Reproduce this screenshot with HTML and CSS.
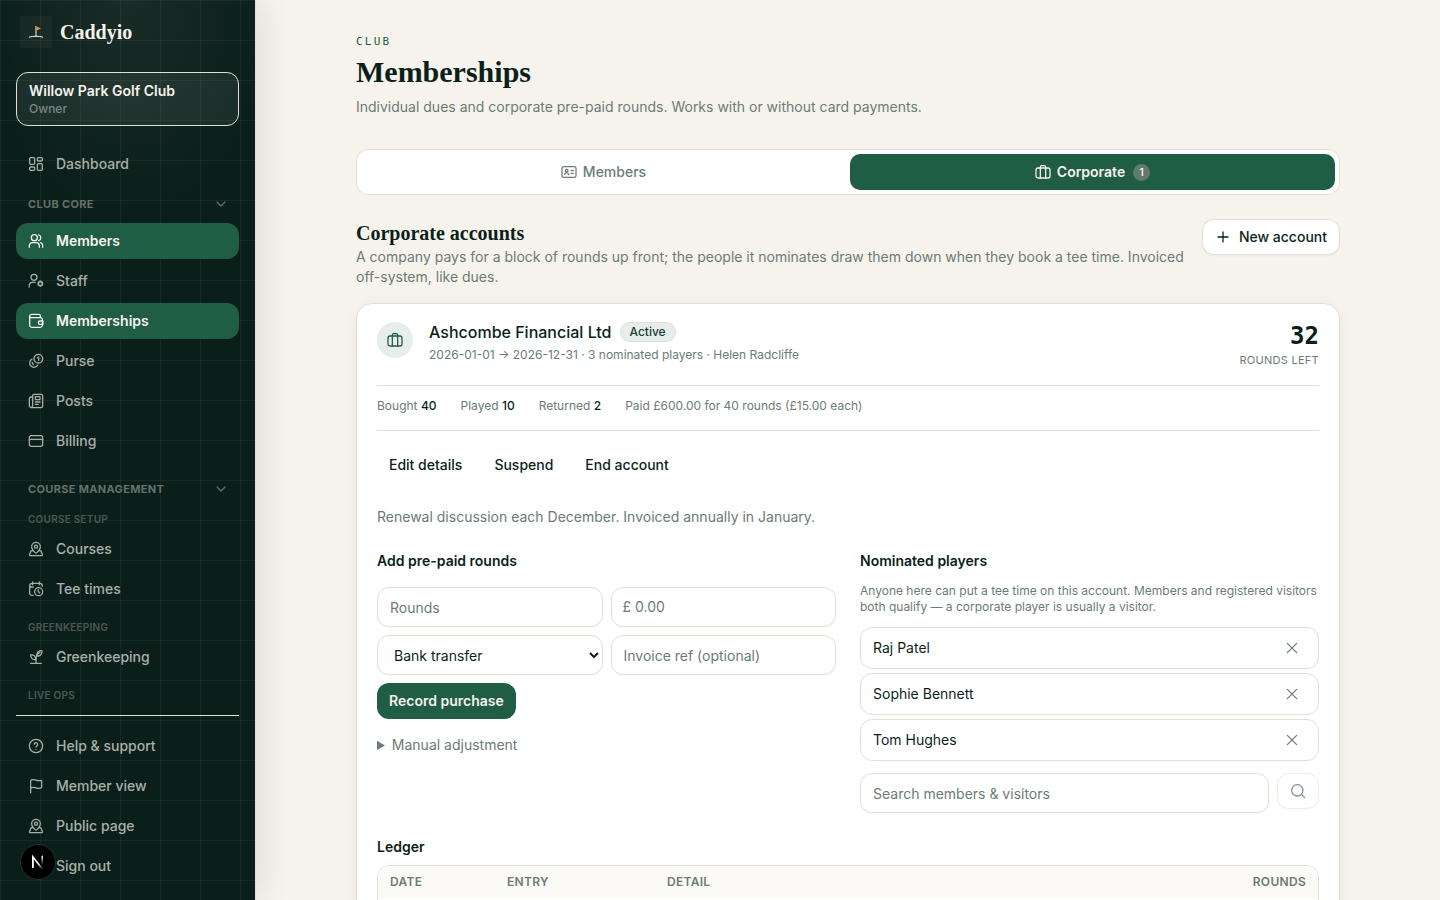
FILE: index.html
```
<!DOCTYPE html>
<html lang="en">
<head>
    <meta charset="UTF-8">
    <meta name="viewport" content="width=device-width, initial-scale=1.0">
    <title>Memberships - Caddyio</title>
    <link rel="stylesheet" href="styles.css">
</head>
<body>
    <!-- shared icons -->
    <svg class="sprite" aria-hidden="true">
        <symbol id="i-dashboard" viewBox="0 0 24 24"><rect x="2.500" y="2.500" width="7.500" height="10" rx="1.500"/><rect x="14" y="2.500" width="7.500" height="5" rx="1.500"/><rect x="2.500" y="16.500" width="7.500" height="5" rx="1.500"/><rect x="14" y="11.500" width="7.500" height="10" rx="1.500"/></symbol>
        <symbol id="i-members" viewBox="0 0 24 24"><circle cx="9.500" cy="7" r="4.500"/><path d="M2 21.500v-2.500a4.500 4.500 0 0 1 4.500-4.500h6a4.500 4.500 0 0 1 4.500 4.500v2.500M16 2.700a4.500 4.500 0 0 1 0 8.600M19 14.500c1.900.7 3 2.300 3 4.500v2.500"/></symbol>
        <symbol id="i-staff" viewBox="0 0 24 24"><circle cx="9" cy="6.500" r="4.500"/><path d="M1.800 21v-2.500A4.500 4.500 0 0 1 6.300 14h4.500"/><path stroke-width="2.600" d="M18.500 12.500l3 1.700v3.600l-3 1.700-3-1.700v-3.600z"/></symbol>
        <symbol id="i-wallet" viewBox="0 0 24 24"><path d="M2.500 5v13a3.500 3.500 0 0 0 3.500 3.500h12a3.500 3.500 0 0 0 3.500-3.500v-8a3 3 0 0 0-3-3H4.500a2 2 0 0 1-2-2a3 3 0 0 1 3-3h11a2 2 0 0 1 2 2V7M22.500 12h-4.500a2.500 2.500 0 0 0 0 5h4.500z"/></symbol>
        <symbol id="i-coins" viewBox="0 0 24 24"><circle cx="15.500" cy="8.500" r="6.500"/><path d="M6 9.200a6.500 6.500 0 1 0 8.800 8.800M14.300 7.200l1.700-1.200v5M6.300 14l1.700 3.500"/></symbol>
        <symbol id="i-posts" viewBox="0 0 24 24"><path d="M6 6H4.500a2.500 2.500 0 0 0-2.500 2.500V19a2.500 2.500 0 0 0 5 0V4a2 2 0 0 1 2-2h11a2 2 0 0 1 2 2v15.500a2.500 2.500 0 0 1-2.500 2.500H4.500"/><rect x="11" y="5.500" width="7" height="4.500" rx="1"/><path d="M11 13.500h7M11 17h4.500"/></symbol>
        <symbol id="i-card" viewBox="0 0 24 24"><rect x="2" y="4" width="20" height="16" rx="3"/><path d="M2 9.500h20"/></symbol>
        <symbol id="i-pin" viewBox="0 0 24 24"><path d="M7 14.500H6a2 2 0 0 0-1.900 1.300l-1.700 4.400A1.300 1.300 0 0 0 3.600 22h16.800a1.300 1.300 0 0 0 1.200-1.800l-1.700-4.400a2 2 0 0 0-1.900-1.300h-1"/><path d="M13.200 17.500a1.700 1.700 0 0 1-2.400 0C8.300 15 5.500 12 5.500 8.500a6.500 6.500 0 0 1 13 0c0 3.500-2.800 6.500-5.300 9z"/><circle cx="12" cy="8.500" r="2.300"/></symbol>
        <symbol id="i-calendar" viewBox="0 0 24 24"><path d="M7 1.500v4M17 1.500v4M7.500 21.500H6A3.500 3.500 0 0 1 2.500 18V7A3.500 3.500 0 0 1 6 3.500h12A3.500 3.500 0 0 1 21.500 7v1M2.500 9H8"/><circle cx="16" cy="16" r="6"/><path d="M15.500 13.500V16l1.700 1.700"/></symbol>
        <symbol id="i-plant" viewBox="0 0 24 24"><path d="M4 21.500h16M12 21.500V14c0-4 2-7 6-9"/><path d="M13.200 10.500C12.500 6 15 2.500 21 2.500c.5 5-2.500 8.500-7.800 8zM12 16c-4.500.5-8-2-8-7 4.500-.5 8 2 8 7z"/></symbol>
        <symbol id="i-help" viewBox="0 0 24 24"><circle cx="12" cy="12" r="10"/><path d="M9.500 9.500a2.500 2.500 0 1 1 3.900 2c-.8.600-1.400 1.100-1.400 2M12 17v.2"/></symbol>
        <symbol id="i-flag" viewBox="0 0 24 24"><path d="M4 22V4.500C4 3 6 2 9 2.500c3 .5 4.500 2 8 1.500 2-.3 3.500-1 3.500.5v9c0 1.500-2 2-4 2-3.500 0-5-1.500-8-1.500-2 0-3.500.5-4.500 1.500"/></symbol>
        <symbol id="i-chevron" viewBox="0 0 24 24"><path d="M4 8l8 8 8-8"/></symbol>
        <symbol id="i-id" viewBox="0 0 24 24"><rect x="1.500" y="4" width="21" height="16" rx="2.500"/><circle cx="8.500" cy="10" r="2"/><path d="M5.500 16c.3-2 1.500-3 3-3s2.700 1 3 3M15 10h3.500M15 14h3.500"/></symbol>
        <symbol id="i-luggage" viewBox="0 0 24 24"><rect x="1.500" y="6" width="21" height="15" rx="3"/><path d="M8 21V4.500a2 2 0 0 1 2-2h4a2 2 0 0 1 2 2V21"/></symbol>
        <symbol id="i-plus" viewBox="0 0 24 24"><path d="M12 4.500v15M4.500 12h15"/></symbol>
        <symbol id="i-close" viewBox="0 0 24 24"><path d="M5 5l14 14M19 5L5 19"/></symbol>
        <symbol id="i-search" viewBox="0 0 24 24"><circle cx="11" cy="11" r="8.500"/><path d="M17.500 17.500L22 22"/></symbol>
    </svg>

    <div class="app">
        <aside class="sidebar">
            <a class="brand" href="#">
                <span class="brand-mark">
                    <svg viewBox="0 0 32 32" fill="none"><path d="M16 21V10" stroke="#f5f2eb" stroke-width="1"/><path d="M16.500 10.500l4.500 2-4.500 2z" fill="#e0963c"/><path d="M9 21.200c4-1.300 10-1.300 14 0" stroke="#f5f2eb" stroke-width="1"/></svg>
                </span>
                <span class="brand-name">Caddyio</span>
            </a>

            <button class="club" type="button">
                <span class="club-name">Willow Park Golf Club</span>
                <span class="club-role">Owner</span>
            </button>

            <nav class="nav">
                <a class="nav-item" href="#"><svg class="icon"><use href="#i-dashboard"/></svg>Dashboard</a>

                <div class="nav-group">
                    <button class="nav-heading" type="button">Club core<svg class="chevron"><use href="#i-chevron"/></svg></button>
                    <div class="nav-list">
                        <a class="nav-item active" href="#"><svg class="icon"><use href="#i-members"/></svg>Members</a>
                        <a class="nav-item" href="#"><svg class="icon"><use href="#i-staff"/></svg>Staff</a>
                        <a class="nav-item active" href="#"><svg class="icon"><use href="#i-wallet"/></svg>Memberships</a>
                        <a class="nav-item" href="#"><svg class="icon"><use href="#i-coins"/></svg>Purse</a>
                        <a class="nav-item" href="#"><svg class="icon"><use href="#i-posts"/></svg>Posts</a>
                        <a class="nav-item" href="#"><svg class="icon"><use href="#i-card"/></svg>Billing</a>
                    </div>
                </div>

                <div class="nav-group">
                    <button class="nav-heading" type="button">Course management<svg class="chevron"><use href="#i-chevron"/></svg></button>
                    <p class="nav-sub">Course setup</p>
                    <div class="nav-list">
                        <a class="nav-item" href="#"><svg class="icon"><use href="#i-pin"/></svg>Courses</a>
                        <a class="nav-item" href="#"><svg class="icon"><use href="#i-calendar"/></svg>Tee times</a>
                    </div>
                    <p class="nav-sub">Greenkeeping</p>
                    <div class="nav-list">
                        <a class="nav-item" href="#"><svg class="icon"><use href="#i-plant"/></svg>Greenkeeping</a>
                    </div>
                    <p class="nav-sub">Live ops</p>
                </div>
            </nav>

            <div class="sidebar-footer nav-list">
                <a class="nav-item" href="#"><svg class="icon"><use href="#i-help"/></svg>Help &amp; support</a>
                <a class="nav-item" href="#"><svg class="icon"><use href="#i-flag"/></svg>Member view</a>
                <a class="nav-item" href="#"><svg class="icon"><use href="#i-pin"/></svg>Public page</a>
                <button class="nav-item" type="button"><span class="icon"></span>Sign out</button>
            </div>
        </aside>

        <main class="main">
            <header class="page-header">
                <p class="eyebrow">Club</p>
                <h1>Memberships</h1>
                <p class="muted">Individual dues and corporate pre-paid rounds. Works with or without card payments.</p>
            </header>

            <div class="tabs" role="tablist">
                <button class="tab" type="button" role="tab"><svg class="icon"><use href="#i-id"/></svg>Members</button>
                <button class="tab selected" type="button" role="tab" aria-selected="true"><svg class="icon"><use href="#i-luggage"/></svg>Corporate<span class="count">1</span></button>
            </div>

            <div class="section-head">
                <div>
                    <h2>Corporate accounts</h2>
                    <p class="muted">A company pays for a block of rounds up front; the people it nominates draw them down when they book a tee time. Invoiced off-system, like dues.</p>
                </div>
                <button class="btn btn-outline" type="button"><svg class="icon"><use href="#i-plus"/></svg>New account</button>
            </div>

            <section class="card">
                <div class="account">
                    <span class="avatar"><svg class="icon"><use href="#i-luggage"/></svg></span>
                    <div class="account-info">
                        <div class="account-title"><span class="account-name">Ashcombe Financial Ltd</span><span class="badge">Active</span></div>
                        <p class="small">2026-01-01 → 2026-12-31 · 3 nominated players · Helen Radcliffe</p>
                    </div>
                    <div class="balance">
                        <div class="balance-value">32</div>
                        <div class="balance-label">Rounds left</div>
                    </div>
                </div>

                <div class="stats small">
                    <span>Bought <b>40</b></span>
                    <span>Played <b>10</b></span>
                    <span>Returned <b>2</b></span>
                    <span>Paid £600.00 for 40 rounds (£15.00 each)</span>
                </div>

                <div class="actions">
                    <button class="btn" type="button">Edit details</button>
                    <button class="btn" type="button">Suspend</button>
                    <button class="btn" type="button">End account</button>
                </div>

                <p class="muted note">Renewal discussion each December. Invoiced annually in January.</p>

                <div class="columns">
                    <form class="purchase">
                        <h3>Add pre-paid rounds</h3>
                        <div class="fields">
                            <input class="field" type="text" placeholder="Rounds" aria-label="Rounds">
                            <label class="field money"><span>£</span><input type="text" placeholder="0.00" aria-label="Amount paid"></label>
                            <select class="field" aria-label="Payment method"><option>Bank transfer</option></select>
                            <input class="field" type="text" placeholder="Invoice ref (optional)" aria-label="Invoice ref">
                        </div>
                        <button class="btn btn-primary" type="button">Record purchase</button>
                        <details>
                            <summary>Manual adjustment</summary>
                        </details>
                    </form>

                    <div class="players">
                        <h3>Nominated players</h3>
                        <p class="small">Anyone here can put a tee time on this account. Members and registered visitors both qualify — a corporate player is usually a visitor.</p>
                        <ul class="player-list">
                            <li>Raj Patel<button class="remove" type="button" aria-label="Remove Raj Patel"><svg class="icon"><use href="#i-close"/></svg></button></li>
                            <li>Sophie Bennett<button class="remove" type="button" aria-label="Remove Sophie Bennett"><svg class="icon"><use href="#i-close"/></svg></button></li>
                            <li>Tom Hughes<button class="remove" type="button" aria-label="Remove Tom Hughes"><svg class="icon"><use href="#i-close"/></svg></button></li>
                        </ul>
                        <div class="search">
                            <input class="field" type="text" placeholder="Search members &amp; visitors" aria-label="Search members and visitors">
                            <button class="btn btn-outline" type="button" aria-label="Search" disabled><svg class="icon"><use href="#i-search"/></svg></button>
                        </div>
                    </div>
                </div>

                <h3 class="ledger-title">Ledger</h3>
                <div class="table-wrap">
                    <table>
                        <thead>
                            <tr>
                                <th class="col-date">Date</th>
                                <th class="col-entry">Entry</th>
                                <th>Detail</th>
                                <th class="col-rounds">Rounds</th>
                            </tr>
                        </thead>
                        <tbody>
                            <tr><td></td><td></td><td></td><td></td></tr>
                        </tbody>
                    </table>
                </div>
            </section>
        </main>
    </div>

    <button class="dev-badge" type="button" aria-label="Dev tools">
        <svg viewBox="0 0 36 36" fill="none">
            <defs>
                <linearGradient id="fade-a" x1="20" y1="19" x2="24" y2="25" gradientUnits="userSpaceOnUse"><stop stop-color="#fff"/><stop offset="1" stop-color="#fff" stop-opacity="0"/></linearGradient>
                <linearGradient id="fade-b" x1="23" y1="12" x2="23" y2="21" gradientUnits="userSpaceOnUse"><stop stop-color="#fff"/><stop offset="1" stop-color="#fff" stop-opacity="0"/></linearGradient>
            </defs>
            <path d="M12.500 24V12.500L23 26" stroke="url(#fade-a)" stroke-width="1.600"/>
            <path d="M12.500 24V12.500" stroke="#fff" stroke-width="1.600"/>
            <path d="M22.500 12h.01v9" stroke="url(#fade-b)" stroke-width="1.600"/>
        </svg>
    </button>
</body>
</html>
```

FILE: styles.css
```
:root {
    --ink: #0b1f1a;
    --green: #1f5d45;
    --cream: #f6f3ec;
    --line: #e2e0d4;
    --muted: #6b7c74;
}
* {
    box-sizing: border-box;
}
body {
    margin: 0;
    background-color: var(--cream);
    color: var(--ink);
    font-family: Inter, "Liberation Sans", sans-serif;
    font-size: 14px;
    line-height: 20px;
}
h1, h2, h3, p, ul {
    margin: 0;
    padding: 0;
}
button, input, select {
    font: inherit;
    color: inherit;
}
button {
    border: 0;
    background: none;
    padding: 0;
    cursor: pointer;
}
a {
    color: inherit;
    text-decoration: none;
}
.sprite {
    display: none;
}
.icon, .chevron {
    width: 16px;
    height: 16px;
    flex-shrink: 0;
    fill: none;
    stroke: currentColor;
    stroke-width: 1.9;
    stroke-linecap: round;
    stroke-linejoin: round;
}
.chevron {
    width: 12px;
    height: 12px;
    stroke-width: 2.4;
}
.app {
    display: flex;
    align-items: flex-start;
}

/* Sidebar */
.sidebar {
    position: sticky;
    top: 0;
    display: flex;
    flex-direction: column;
    flex-shrink: 0;
    width: 256px;
    height: 100vh;
    padding: 16px 16px 0;
    border-right: 1px solid var(--line);
    color: #a9b0a9;
    background-color: var(--ink);
    background-image:
        linear-gradient(rgba(245, 242, 235, 0.05) 1px, transparent 1px),
        linear-gradient(90deg, rgba(245, 242, 235, 0.05) 1px, transparent 1px),
        radial-gradient(ellipse 150px 220px at 50% 0, rgba(245, 242, 235, 0.06), transparent);
    background-size: 40px 40px, 40px 40px, 100% 100%;
    box-shadow: 4px 0 30px rgba(11, 31, 26, 0.1);
}
.brand {
    display: flex;
    align-items: center;
    gap: 8px;
    padding: 0 4px;
}
.brand-mark {
    width: 32px;
    height: 32px;
    background-color: rgba(245, 242, 235, 0.04);
}
.brand-mark svg {
    display: block;
}
.brand-name {
    color: var(--cream);
    font-family: "Liberation Serif", serif;
    font-size: 20px;
    font-weight: 700;
}
.club {
    display: flex;
    flex-direction: column;
    margin: 24px 0 20px;
    padding: 8px 12px;
    border: 1px solid var(--line);
    border-radius: 12px;
    background-color: rgba(245, 242, 235, 0.07);
    text-align: left;
}
.club-name {
    color: var(--cream);
    font-weight: 600;
}
.club-role {
    color: #7d8781;
    font-size: 12px;
    font-weight: 500;
    line-height: 16px;
}
.nav {
    flex: 1;
    min-height: 0;
    overflow: hidden;
}
.nav-list {
    display: flex;
    flex-direction: column;
    gap: 4px;
}
.nav-item {
    display: flex;
    align-items: center;
    gap: 12px;
    height: 36px;
    flex-shrink: 0;
    padding: 0 12px;
    border-radius: 12px;
    font-weight: 500;
}
.nav-item.active {
    background-color: var(--green);
    color: var(--cream);
    font-weight: 600;
}
.nav-group {
    margin-top: 10px;
}
.nav-group + .nav-group {
    margin-top: 18px;
}
.nav-heading {
    display: flex;
    justify-content: space-between;
    align-items: center;
    width: 100%;
    height: 24px;
    margin-bottom: 7px;
    padding: 0 12px;
    color: #65726a;
    font-size: 11px;
    font-weight: 700;
    letter-spacing: 0.03em;
    text-transform: uppercase;
}
.nav-sub {
    margin: 12px 0 4px;
    padding: 0 12px;
    color: #4c5952;
    font-size: 10px;
    font-weight: 600;
    letter-spacing: 0.025em;
    line-height: 16px;
    text-transform: uppercase;
}
.nav-heading + .nav-sub {
    margin-top: 10px;
}
.sidebar-footer {
    padding: 12px 0 16px;
    border-top: 1px solid var(--line);
}

/* Page */
.main {
    flex: 1;
    min-width: 0;
    max-width: 1024px;
    margin: 0 auto;
    padding: 34px 20px;
}
.eyebrow {
    color: var(--green);
    font-family: "DejaVu Sans Mono", monospace;
    font-size: 11px;
    letter-spacing: 0.2em;
    line-height: 16px;
    text-transform: uppercase;
}
h1, h2 {
    font-family: "Liberation Serif", serif;
    font-weight: 700;
}
h1 {
    margin: 4px 0 7px;
    font-size: 30px;
    line-height: 36px;
}
h2 {
    font-size: 20px;
    line-height: 28px;
}
h3 {
    font-size: 14px;
    font-weight: 600;
    line-height: 20px;
}
.muted {
    color: var(--muted);
}
.small {
    color: var(--muted);
    font-size: 12px;
    line-height: 16px;
}
.tabs {
    display: grid;
    grid-template-columns: 1fr 1fr;
    gap: 4px;
    margin: 32px 0 24px;
    padding: 4px;
    border: 1px solid var(--line);
    border-radius: 12px;
    background-color: #fff;
}
.tab {
    display: flex;
    align-items: center;
    justify-content: center;
    gap: 6px;
    height: 36px;
    border-radius: 10px;
    color: var(--muted);
    font-weight: 500;
}
.tab.selected {
    background-color: var(--green);
    color: var(--cream);
    font-weight: 600;
}
.count {
    width: 17px;
    height: 17px;
    margin-left: 2px;
    border-radius: 50%;
    background-color: #62796c;
    font-size: 10px;
    line-height: 17px;
    text-align: center;
}
.section-head {
    display: flex;
    align-items: flex-start;
    justify-content: space-between;
    gap: 12px;
    margin-bottom: 16px;
}
.btn {
    display: inline-flex;
    align-items: center;
    justify-content: center;
    gap: 8px;
    flex-shrink: 0;
    height: 36px;
    padding: 0 12px;
    border-radius: 12px;
    font-weight: 500;
}
.btn-outline {
    border: 1px solid var(--line);
    background-color: #fff;
    box-shadow: 0 1px 2px rgba(11, 31, 26, 0.05);
}
.btn-primary {
    background-color: var(--green);
    color: var(--cream);
    font-weight: 600;
}
.btn:disabled {
    opacity: 0.5;
}

/* Account card */
.card {
    padding: 16px 20px;
    border: 1px solid var(--line);
    border-radius: 16px;
    background-color: #fff;
    box-shadow: 0 4px 16px rgba(11, 31, 26, 0.06);
}
.account {
    display: flex;
    align-items: flex-start;
    gap: 16px;
    padding-bottom: 17px;
}
.avatar {
    display: flex;
    align-items: center;
    justify-content: center;
    width: 36px;
    height: 36px;
    margin-top: 2px;
    border-radius: 50%;
    background-color: #e6edea;
    color: var(--green);
}
.account-info {
    flex: 1;
}
.account-title {
    display: flex;
    align-items: center;
    gap: 8px;
    margin-bottom: 3px;
}
.account-name {
    font-size: 16px;
    font-weight: 500;
    line-height: 24px;
}
.badge {
    padding: 0 9px;
    border: 1px solid var(--line);
    border-radius: 10px;
    background-color: #e6edea;
    color: #173f31;
    font-size: 12px;
    font-weight: 500;
    line-height: 18px;
}
.balance {
    text-align: right;
}
.balance-value {
    font-family: "DejaVu Sans Mono", monospace;
    font-size: 24px;
    font-weight: 700;
    line-height: 32px;
}
.balance-label {
    color: var(--muted);
    font-size: 11px;
    letter-spacing: 0.025em;
    line-height: 16px;
    text-transform: uppercase;
}
.stats {
    display: flex;
    gap: 24px;
    padding: 12px 0 16px;
    border-top: 1px solid var(--line);
    border-bottom: 1px solid var(--line);
}
.stats b {
    color: var(--ink);
    font-weight: 500;
}
.actions {
    display: flex;
    gap: 8px;
    margin: 16px 0 24px;
}
.note {
    margin-bottom: 24px;
}
.columns {
    display: grid;
    grid-template-columns: 1fr 1fr;
    gap: 24px;
}
.fields {
    display: grid;
    grid-template-columns: 1fr 1fr;
    gap: 8px;
    margin: 16px 0 8px;
}
.field {
    width: 100%;
    min-width: 0;
    height: 40px;
    padding: 0 12px;
    border: 1px solid var(--line);
    border-radius: 12px;
    background-color: #fff;
    box-shadow: 0 1px 2px rgba(11, 31, 26, 0.03);
}
select.field {
    padding: 0 0 0 12px;
}
.field::placeholder, .money input::placeholder {
    color: var(--muted);
    opacity: 1;
}
.money {
    display: flex;
    align-items: center;
    gap: 4px;
    padding: 0 11px;
    color: var(--muted);
}
.money input {
    width: 100%;
    padding: 0;
    border: 0;
    outline: 0;
    background: none;
}
details {
    margin-top: 16px;
    color: var(--muted);
}
.players .small {
    margin: 12px 0;
}
.player-list {
    display: flex;
    flex-direction: column;
    gap: 4px;
    list-style: none;
}
.player-list li {
    display: flex;
    align-items: center;
    justify-content: space-between;
    height: 42px;
    padding: 0 12px;
    border: 1px solid var(--line);
    border-radius: 12px;
}
.remove {
    display: flex;
    padding: 6px;
    color: var(--muted);
}
.search {
    display: flex;
    align-items: flex-start;
    gap: 8px;
    margin-top: 12px;
}
.ledger-title {
    margin: 24px 0 8px;
}
.table-wrap {
    overflow: hidden;
    border: 1px solid var(--line);
    border-radius: 12px;
}
table {
    width: 100%;
    border-collapse: collapse;
    table-layout: fixed;
}
th {
    padding: 8px 12px;
    background-color: #fbfaf7;
    color: var(--muted);
    font-size: 12px;
    font-weight: 600;
    letter-spacing: 0.025em;
    line-height: 16px;
    text-align: left;
    text-transform: uppercase;
}
td {
    height: 36px;
}
.col-date {
    width: 117px;
}
.col-entry {
    width: 160px;
}
.col-rounds {
    width: 96px;
    text-align: right;
}

.dev-badge {
    position: fixed;
    bottom: 20px;
    left: 20px;
    width: 36px;
    height: 36px;
    border: 1px solid #24332f;
    border-radius: 50%;
    background-color: #000;
}
.dev-badge svg {
    display: block;
}
```
